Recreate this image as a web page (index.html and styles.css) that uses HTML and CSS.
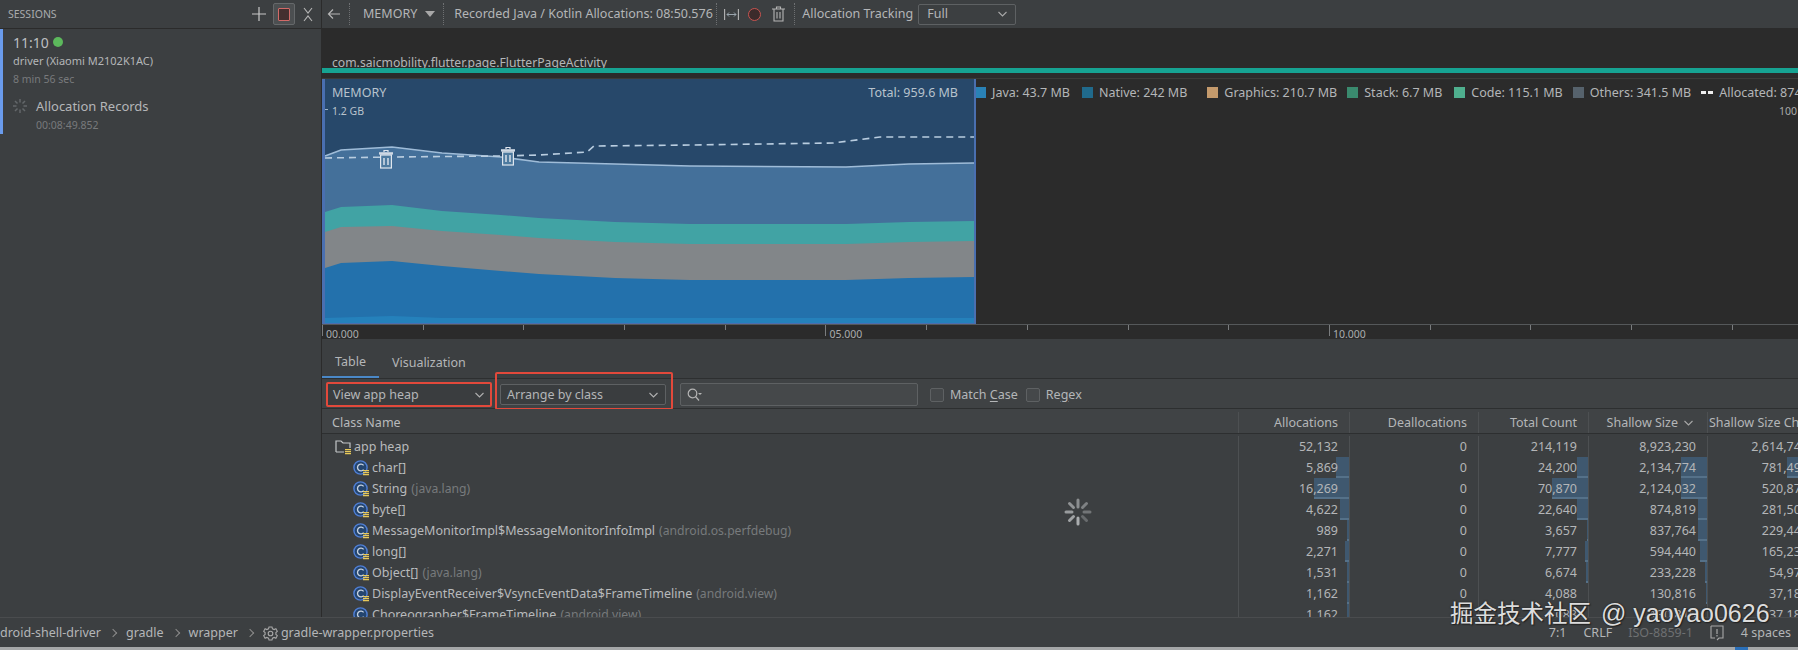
FILE: index.html
```html
<!DOCTYPE html>
<html lang="en">
<head>
<meta charset="utf-8">
<title>Memory Profiler</title>
<link rel="stylesheet" href="styles.css">
</head>
<body>
<svg class="defs" width="0" height="0">
  <symbol id="class-icon" viewBox="0 0 18 16">
    <circle cx="7.5" cy="7.5" r="6.6" fill="#24456f" stroke="#4f7fd6" stroke-width="1.4"/>
    <path d="M10.6 5.4A3.4 3.4 0 1 0 10.6 9.6" fill="none" stroke="#c9d3e0" stroke-width="1.3"/>
    <path d="M10 10.6h6M10 12.6h6M10 14.6h6" stroke="#e8c95a" stroke-width="1.1"/>
  </symbol>
  <symbol id="folder-icon" viewBox="0 0 18 16">
    <path d="M1 13V2h5l2 2h7v5M9 13H1" fill="none" stroke="#c4c7c9" stroke-width="1.2"/>
    <path d="M10 10.6h6M10 12.6h6M10 14.6h6" stroke="#e8c95a" stroke-width="1.1"/>
  </symbol>
  <symbol id="marker" viewBox="0 0 16 20">
    <path d="M6 3V1.5h4V3" fill="none" stroke="#dfe6ee" stroke-width="1.2"/>
    <rect x="1" y="3.2" width="14" height="2.4" fill="#cfd9e4"/>
    <rect x="2.6" y="6" width="10.8" height="13" fill="#4d7a9f" stroke="#dfe6ee" stroke-width="1.2"/>
    <path d="M6 9v7M10 9v7" stroke="#dfe6ee" stroke-width="1.4"/>
  </symbol>
</svg>

<div class="app">
  <aside class="sidebar">
    <div class="side-head">
      <span class="side-title">SESSIONS</span>
      <svg class="ic-plus" width="14" height="14" viewBox="0 0 14 14"><path d="M7 0v14M0 7h14" stroke="#c8c8c8" stroke-width="1.2"/></svg>
      <span class="stop-btn"><span class="stop-inner"></span></span>
      <svg class="ic-collapse" width="10" height="15" viewBox="0 0 10 15"><path d="M1 1l4 5 4-5M1 14l4-5 4 5" fill="none" stroke="#b5b5b5" stroke-width="1.1"/></svg>
    </div>
    <div class="session">
      <div class="sess-time">11:10<span class="dot"></span></div>
      <div class="sess-dev">driver (Xiaomi M2102K1AC)</div>
      <div class="sess-len">8 min 56 sec</div>
      <div class="rec-row">
        <svg class="rec-spin" width="14" height="14" viewBox="0 0 14 14"><path d="M7 0v3.5M7 10.5V14M0 7h3.5M10.5 7H14M2 2l2.5 2.5M9.5 9.5L12 12M12 2L9.5 4.5M4.500 9.5L2 12" stroke="#63676a" stroke-width="1.5"/></svg>
        <span>Allocation Records</span>
      </div>
      <div class="rec-time">00:08:49.852</div>
    </div>
  </aside>

  <main class="main">
    <div class="toolbar">
      <svg class="ic-back" width="14" height="12" viewBox="0 0 14 12"><path d="M13 6H2M6 1.500L1.500 6 6 10.500" fill="none" stroke="#b5b5b5" stroke-width="1.2"/></svg>
      <span class="sep sep-a"></span>
      <span class="tb-mem">MEMORY</span>
      <svg class="ic-tri" width="10" height="6" viewBox="0 0 10 6"><path d="M0 0h10L5 6z" fill="#a8a8a8"/></svg>
      <span class="sep sep-b"></span>
      <span class="tb-rec">Recorded Java / Kotlin Allocations: 08:50.576</span>
      <span class="sep sep-c"></span>
      <svg class="ic-fit" width="15" height="13" viewBox="0 0 15 13"><path d="M.6 1v11M14.400 1v11" stroke="#b5b5b5" stroke-width="1.1"/><path d="M3 6.500h9M5 4.500L3 6.500l2 2M10 4.500l2 2-2 2" fill="none" stroke="#9aa5ad" stroke-width="1"/></svg>
      <span class="rec-btn"></span>
      <svg class="ic-trash" width="13" height="16" viewBox="0 0 13 16"><path d="M0 3h13M4.500 3V1h4v2M2 3.500V15h9V3.500M5 6v6.500M8 6v6.500" fill="none" stroke="#b5b5b5" stroke-width="1.1"/></svg>
      <span class="sep sep-d"></span>
      <span class="tb-track">Allocation Tracking</span>
      <span class="combo combo-full"><span>Full</span><svg class="chev" width="9" height="6" viewBox="0 0 9 6"><path d="M.5 1l4 4 4-4" fill="none" stroke="#a8a8a8" stroke-width="1.1"/></svg></span>
    </div>

    <div class="activity">
      <span class="activity-name">com.saicmobility.flutter.page.FlutterPageActivity</span>
      <div class="activity-bar"></div>
    </div>

    <div class="monitor">
      <div class="chart">
        <svg class="chart-svg" width="654" height="245" viewBox="322 79 654 245">
          <rect x="322" y="79" width="654" height="245" fill="#27486a"/>
          <path d="M325 156L341 150 392 147 442 153 501 157 539 162 615 164 690 166 846 167 909 164 974 163V323H325Z" fill="#44709a"/>
          <path d="M325 212L341 207 392 205 442 211 501 215 539 218 615 222 690 224 846 224 909 222 974 221V323H325Z" fill="#41a3a4"/>
          <path d="M325 232L341 227 392 226 442 231 501 235 539 238 615 242 690 244 846 244 909 242 974 241V323H325Z" fill="#828689"/>
          <path d="M325 268L341 263 392 261 442 266 501 271 539 274 615 278 690 280 846 280 909 278 974 277V323H325Z" fill="#2371ac"/>
          <path d="M325 318L392 316 442 318H974V323H325Z" fill="#2581bb"/>
          <path d="M325 156L341 150 392 147 442 153 501 157 539 162 615 164 690 166 846 167 909 164 974 163" fill="none" stroke="#9fbcd8" stroke-width="1.6"/>
          <path d="M325 158L392 157 501 156 539 155 587 152 594 146 690 145 833 143 880 137H974" fill="none" stroke="#b9cde0" stroke-width="1.6" stroke-dasharray="7 5"/>
          <use href="#marker" x="378" y="149" width="16" height="20"/>
          <use href="#marker" x="500" y="146" width="16" height="20"/>
          <rect x="322" y="79" width="3" height="245" fill="#4a6fb0"/>
          <rect x="974" y="79" width="2" height="245" fill="#4a6fb0"/>
          <rect x="322" y="323" width="654" height="1" fill="#4a6fb0"/>
          <rect x="325" y="109" width="3" height="1" fill="#9fb3c6"/>
        </svg>
        <span class="chart-title">MEMORY</span>
        <span class="chart-scale">1.2 GB</span>
        <span class="chart-total">Total: 959.6 MB</span>
      </div>
      <div class="legend">
        <span class="lg lg-java"><i class="sw"></i>Java: 43.7 MB</span>
        <span class="lg lg-native"><i class="sw"></i>Native: 242 MB</span>
        <span class="lg lg-graphics"><i class="sw"></i>Graphics: 210.7 MB</span>
        <span class="lg lg-stack"><i class="sw"></i>Stack: 6.7 MB</span>
        <span class="lg lg-code"><i class="sw"></i>Code: 115.1 MB</span>
        <span class="lg lg-others"><i class="sw"></i>Others: 341.5 MB</span>
        <span class="lg lg-alloc"><i class="dash"></i>Allocated: 874.2 MB</span>
      </div>
      <span class="right-scale">100</span>
    </div>

    <div class="axis">
      <span class="tick major"><em>00.000</em></span><span class="tick"></span><span class="tick"></span><span class="tick"></span><span class="tick"></span>
      <span class="tick major"><em>05.000</em></span><span class="tick"></span><span class="tick"></span><span class="tick"></span><span class="tick"></span>
      <span class="tick major"><em>10.000</em></span><span class="tick"></span><span class="tick"></span><span class="tick"></span><span class="tick"></span>
    </div>

    <div class="tabs">
      <span class="tab active">Table</span>
      <span class="tab">Visualization</span>
    </div>

    <div class="filters">
      <span class="combo combo-heap mark-heap"><span>View app heap</span><svg class="chev" width="9" height="6" viewBox="0 0 9 6"><path d="M.5 1l4 4 4-4" fill="none" stroke="#b0b0b0" stroke-width="1.1"/></svg></span>
      <span class="combo combo-arrange mark-arrange"><span>Arrange by class</span><svg class="chev" width="9" height="6" viewBox="0 0 9 6"><path d="M.5 1l4 4 4-4" fill="none" stroke="#b0b0b0" stroke-width="1.1"/></svg></span>
      <span class="search">
        <svg width="15" height="14" viewBox="0 0 15 14"><circle cx="5.500" cy="5.500" r="4.300" fill="none" stroke="#b5b5b5" stroke-width="1.2"/><path d="M8.500 8.500L12 12.500" stroke="#b5b5b5" stroke-width="1.2"/><path d="M11 5h4l-2 2z" fill="#b5b5b5"/></svg>
      </span>
      <span class="check check-a"></span><span class="check-label">Match <u>C</u>ase</span>
      <span class="check check-b"></span><span class="check-label">Re<u>g</u>ex</span>
    </div>

    <div class="table">
      <div class="row head">
        <span class="c name">Class Name</span>
        <span class="c num">Allocations</span>
        <span class="c num">Deallocations</span>
        <span class="c num">Total Count</span>
        <span class="c num sorted">Shallow Size<svg class="chev" width="9" height="6" viewBox="0 0 9 6"><path d="M.5 1l4 4 4-4" fill="none" stroke="#a8a8a8" stroke-width="1.1"/></svg></span>
        <span class="c last">Shallow Size Change</span>
      </div>
      <div class="row">
        <span class="c name root"><svg class="ic"><use href="#folder-icon"/></svg>app heap</span>
        <span class="c num">52,132</span><span class="c num">0</span><span class="c num">214,119</span><span class="c num">8,923,230</span><span class="c num end">2,614,748</span>
      </div>
      <div class="row">
        <span class="c name"><svg class="ic"><use href="#class-icon"/></svg>char[]</span>
        <span class="c num"><b class="bar" style="width:13px"></b>5,869</span><span class="c num">0</span><span class="c num"><b class="bar" style="width:11px"></b>24,200</span><span class="c num"><b class="bar" style="width:26px"></b>2,134,774</span><span class="c num end"><b class="bar" style="width:32px"></b>781,496</span>
      </div>
      <div class="row">
        <span class="c name"><svg class="ic"><use href="#class-icon"/></svg>String <small>(java.lang)</small></span>
        <span class="c num"><b class="bar" style="width:35px"></b>16,269</span><span class="c num">0</span><span class="c num"><b class="bar" style="width:36px"></b>70,870</span><span class="c num"><b class="bar" style="width:26px"></b>2,124,032</span><span class="c num end">520,872</span>
      </div>
      <div class="row">
        <span class="c name"><svg class="ic"><use href="#class-icon"/></svg>byte[]</span>
        <span class="c num"><b class="bar" style="width:9px"></b>4,622</span><span class="c num">0</span><span class="c num"><b class="bar" style="width:11px"></b>22,640</span><span class="c num"><b class="bar" style="width:9px"></b>874,819</span><span class="c num end">281,504</span>
      </div>
      <div class="row">
        <span class="c name"><svg class="ic"><use href="#class-icon"/></svg>MessageMonitorImpl$MessageMonitorInfoImpl <small>(android.os.perfdebug)</small></span>
        <span class="c num"><b class="bar" style="width:2px"></b>989</span><span class="c num">0</span><span class="c num"><b class="bar" style="width:1px"></b>3,657</span><span class="c num"><b class="bar" style="width:9px"></b>837,764</span><span class="c num end">229,440</span>
      </div>
      <div class="row">
        <span class="c name"><svg class="ic"><use href="#class-icon"/></svg>long[]</span>
        <span class="c num"><b class="bar" style="width:4px"></b>2,271</span><span class="c num">0</span><span class="c num"><b class="bar" style="width:3px"></b>7,777</span><span class="c num"><b class="bar" style="width:7px"></b>594,440</span><span class="c num end">165,232</span>
      </div>
      <div class="row">
        <span class="c name"><svg class="ic"><use href="#class-icon"/></svg>Object[] <small>(java.lang)</small></span>
        <span class="c num"><b class="bar" style="width:2px"></b>1,531</span><span class="c num">0</span><span class="c num"><b class="bar" style="width:2px"></b>6,674</span><span class="c num"><b class="bar" style="width:2px"></b>233,228</span><span class="c num end">54,976</span>
      </div>
      <div class="row">
        <span class="c name"><svg class="ic"><use href="#class-icon"/></svg>DisplayEventReceiver$VsyncEventData$FrameTimeline <small>(android.view)</small></span>
        <span class="c num"><b class="bar" style="width:2px"></b>1,162</span><span class="c num">0</span><span class="c num">4,088</span><span class="c num"><b class="bar" style="width:1px"></b>130,816</span><span class="c num end">37,184</span>
      </div>
      <div class="row">
        <span class="c name"><svg class="ic"><use href="#class-icon"/></svg>Choreographer$FrameTimeline <small>(android.view)</small></span>
        <span class="c num"><b class="bar" style="width:2px"></b>1,162</span><span class="c num">0</span><span class="c num">4,088</span><span class="c num">130,816</span><span class="c num end">37,184</span>
      </div>
      <svg class="spinner" width="30" height="30" viewBox="0 0 30 30">
        <path d="M15 3v7" stroke="#8a8d8f" stroke-width="3" stroke-linecap="round"/>
        <path d="M23.500 6.500l-4 4" stroke="#7e8183" stroke-width="3" stroke-linecap="round"/>
        <path d="M27 15h-6" stroke="#727577" stroke-width="3" stroke-linecap="round"/>
        <path d="M23.500 23.500l-4-4" stroke="#686b6d" stroke-width="3" stroke-linecap="round"/>
        <path d="M15 27v-6" stroke="#aaadaf" stroke-width="3" stroke-linecap="round"/>
        <path d="M6.500 23.500l4-4" stroke="#a0a3a5" stroke-width="3" stroke-linecap="round"/>
        <path d="M3 15h6" stroke="#989b9d" stroke-width="3" stroke-linecap="round"/>
        <path d="M6.500 6.500l4 4" stroke="#909395" stroke-width="3" stroke-linecap="round"/>
      </svg>
    </div>
  </main>
</div>

<footer class="status">
  <div class="crumbs">
    <span class="crumb">droid-shell-driver</span><i class="gt"></i>
    <span class="crumb">gradle</span><i class="gt"></i>
    <span class="crumb">wrapper</span><i class="gt"></i>
    <svg class="gear" width="15" height="15" viewBox="0 0 15 15"><circle cx="7.500" cy="7.500" r="2.300" fill="none" stroke="#a8a8a8" stroke-width="1.100"/><path d="M6 1h3l.5 1.800 1.700.8 1.700-.8 1.400 2.500-1.400 1.300v1.800l1.400 1.300-1.400 2.500-1.700-.8-1.700.8L9 14H6l-.5-1.800-1.700-.8-1.700.8L.7 9.700l1.400-1.300V6.600L.7 5.300l1.400-2.500 1.700.8 1.700-.8z" fill="none" stroke="#a8a8a8" stroke-width="1.100"/></svg>
    <span class="crumb">gradle-wrapper.properties</span>
  </div>
  <div class="status-right">
    <span class="st-pos">7:1</span>
    <span class="st-crlf">CRLF</span>
    <span class="st-enc">ISO-8859-1</span>
    <svg class="st-ic" width="14" height="16" viewBox="0 0 14 16"><path d="M1 1h12v12H9l-2 2" fill="none" stroke="#a8a8a8" stroke-width="1.100"/><path d="M1 1v12h4" fill="none" stroke="#a8a8a8" stroke-width="1.100"/><path d="M7 4v5M7 10v1.500" stroke="#a8a8a8" stroke-width="1.200"/></svg>
    <span class="st-ind">4 spaces</span>
  </div>
</footer>
<div class="strip"><span class="strip-mark"></span></div>
<div class="watermark">掘金技术社区<span class="wm-latin">@ yaoyao0626</span></div>
</body>
</html>
```
FILE: styles.css
```css
* { box-sizing: border-box; }
html, body { margin: 0; height: 650px; overflow: hidden; }
body {
  position: relative;
  display: flex;
  flex-direction: column;
  width: 1798px;
  background: #3c3f41;
  color: #b4b6b8;
  font: 12.5px/16px "Noto Sans", "Noto Sans CJK SC", sans-serif;
}
.defs { position: absolute; }
.app { display: flex; height: 617px; min-height: 0; }

/* sidebar */
.sidebar { flex: 0 0 322px; background: #3c3f41; border-right: 1px solid #2b2b2b; }
.side-head {
  display: flex; align-items: center; height: 29px; padding-left: 8px;
  border-bottom: 1px solid #2b2b2b;
}
.side-title { font-size: 10.5px; color: #a9abad; flex: 1; }
.ic-plus { margin-right: 7px; }
.stop-btn {
  display: flex; align-items: center; justify-content: center;
  width: 22px; height: 22px; margin-right: 8px;
  background: #4c4f51; border: 1px solid #65686a; border-radius: 2px;
}
.stop-inner { width: 12px; height: 13px; background: #432f2f; border: 1px solid #d26a68; border-radius: 1px; }
.ic-collapse { margin-right: 8px; }
.session { height: 105px; padding: 4px 0 0 10px; border-left: 3px solid #6a9bec; }
.sess-time { display: flex; align-items: center; font-size: 14px; line-height: 20px; color: #bcbec0; }
.dot { width: 10px; height: 10px; margin: -3px 0 0 4px; border-radius: 50%; background: #5cb85c; }
.sess-dev { margin-top: 0; font-size: 11px; color: #b4b6b8; line-height: 16px; }
.sess-len { margin-top: 2px; font-size: 10.5px; color: #787a7c; line-height: 16px; }
.rec-row { display: flex; align-items: center; gap: 9px; margin-top: 10px; font-size: 13px; line-height: 18px; color: #b4b6b8; }
.rec-time { margin: 3px 0 0 23px; font-size: 10.500px; line-height: 14px; color: #787a7c; }

/* toolbar */
.main { position: relative; flex: 1; min-width: 0; display: flex; flex-direction: column; overflow: hidden; }
.toolbar { display: flex; align-items: center; flex: 0 0 28px; background: #3c3f41; white-space: nowrap; }
.ic-back { margin-left: 5px; }
.sep { width: 0; height: 22px; border-left: 1px dotted #6e7072; }
.sep-a { margin-left: 8px; }
.tb-mem { margin-left: 13px; }
.ic-tri { margin-left: 8px; }
.sep-b { margin-left: 8px; }
.tb-rec { margin-left: 10px; width: 260px; }
.sep-c { margin-left: 2px; }
.ic-fit { margin-left: 7px; }
.rec-btn { width: 13px; height: 13px; margin-left: 9px; border-radius: 50%; border: 1px solid #c75450; background: #3c2b2b; }
.ic-trash { margin-left: 11px; }
.sep-d { margin-left: 9px; }
.tb-track { margin-left: 7px; width: 113px; }
.combo {
  display: flex; align-items: center; justify-content: space-between;
  border: 1px solid #5e6163; border-radius: 2px; background: #3c3f41; padding: 0 8px;
}
.combo-full { width: 98px; height: 21px; margin-left: 3px; }

/* activity */
.activity { flex: 0 0 51px; display: flex; flex-direction: column; justify-content: flex-end; background: #2b2b2b; border-bottom: 1px solid #3b3b38; padding-bottom: 5px; }
.activity-name { padding-left: 10px; font-size: 12.200px; line-height: 15px; margin-bottom: -2px; color: #b4b6b8; }
.activity-bar { height: 5px; background: #16a392; }

/* chart */
.monitor { position: relative; display: flex; flex: 0 0 245px; background: #2b2b2b; }
.chart { position: relative; flex: 0 0 654px; height: 245px; }
.chart-svg { display: block; }
.chart-title, .chart-scale, .chart-total { position: absolute; color: #b8c3cd; }
.chart-title { left: 10px; top: 6px; }
.chart-scale { left: 10px; top: 24px; font-size: 10.500px; }
.chart-total { right: 18px; top: 6px; }
.legend { display: flex; height: 21px; padding: 6px 0 0 1px; white-space: nowrap; }
.lg { display: flex; align-items: center; margin-right: 10px; }
.sw { width: 11px; height: 11px; margin-right: 6px; }
.lg-java { margin-left: -2px; margin-right: 12px; }
.lg-java .sw { background: #2a82b6; }
.lg-native { margin-right: 20px; }
.lg-native .sw { background: #206a8c; }
.lg-graphics .sw { background: #c49a6c; }
.lg-stack { margin-right: 12px; }
.lg-stack .sw { background: #3a8a6e; }
.lg-code .sw { background: #4faf8e; }
.lg-others .sw { background: #56626c; }
.dash { width: 12px; height: 3px; margin-right: 6px; background: linear-gradient(90deg, #eee 0 5px, transparent 5px 7px, #eee 7px); }
.right-scale { position: absolute; left: 1457px; top: 24px; font-size: 10.500px; color: #a8a8a8; }

/* axis */
.axis { display: flex; flex: 0 0 15px; background: #2b2b2b; border-top: 1px solid #55585a; }
.tick { position: relative; flex: 0 0 100.700px; height: 5px; border-left: 1px solid #7a7c7e; }
.tick.major { height: 11px; }
.tick em { position: absolute; left: 3px; top: 3px; font-style: normal; font-size: 10.500px; line-height: 13px; color: #aaacae; }

/* tabs */
.tabs { display: flex; flex: 0 0 39px; align-items: stretch; }
.tab { display: flex; align-items: center; padding: 8px 13px 0; color: #b4b6b8; }
.tab.active { border-bottom: 2px solid #4a88c7; }

/* filters */
.filters { display: flex; align-items: center; flex: 0 0 31px; border-top: 1px solid #2d2f30; border-bottom: 1px solid #2d2f30; padding: 2px 0 0 4px; background: #3f4244; }
.combo-heap { width: 166px; height: 25px; padding: 0 6px 0 5px; background: #3a3d3f; }
.combo-arrange { width: 166px; height: 21px; margin-left: 8px; background: #3a3d3f; padding: 0 7px 0 6px; }
.mark-heap, .mark-arrange { position: relative; }
.mark-heap { border: 2px solid #e2493b; }
.mark-arrange::after {
  content: ""; position: absolute; left: -6px; right: -8px; top: -13px; bottom: -6px;
  border: 2px solid #e2493b; border-radius: 2px;
}
.search { display: flex; align-items: center; width: 238px; height: 23px; margin-left: 14px; padding-left: 6px; border: 1px solid #5e6163; border-radius: 2px; background: #45484a; }
.check { width: 14px; height: 14px; border: 1px solid #5e6163; border-radius: 2px; background: #45484a; }
.check-a { margin-left: 12px; }
.check-b { margin-left: 8px; }
.check-label { margin-left: 6px; }
.check-label u { text-underline-offset: 2px; }

/* table */
.table { position: relative; flex: 1; min-height: 0; overflow: hidden; background: #3c3f41; }
.row { display: grid; grid-template-columns: 916px 111px 129px 110px 119px 112px; width: 1597px; height: 21px; }
.row.head { height: 25px; padding-top: 3px; border-bottom: 1px solid #2d2f30; background: #404345; margin-bottom: 2px; }
.c { position: relative; display: flex; align-items: center; white-space: nowrap; border-left: 1px solid #4d5052; line-height: 21px; z-index: 0; }
.c.name { border-left: 0; padding-left: 31px; color: #b8babc; }
.c.name.root { padding-left: 13px; }
.c.num { justify-content: flex-end; padding-right: 11px; }
.head .c.name { padding-left: 10px; }
.head .chev { position: absolute; right: 14px; top: 8px; }
.head .c.sorted { padding-right: 29px; }
.head .c.last { padding-left: 1px; }
.ic { flex: 0 0 18px; width: 18px; height: 16px; margin-right: 1px; }
small { margin-left: 4px; font-size: 12.200px; color: #777a7c; }
.bar { position: absolute; right: 0; top: 0; bottom: 0; z-index: -1; background: #3f586f; border-bottom: 2px solid #557189; }
.spinner { position: absolute; left: 741px; top: 88px; }

/* status */
.status { display: flex; align-items: center; justify-content: space-between; flex: 0 0 30px; padding-top: 1px; background: #3c3f41; border-top: 1px solid #4a4c4e; font-size: 12.500px; }
.crumbs { display: flex; align-items: center; }
.gt { width: 6px; height: 6px; margin: 0 10px 0 9px; border-top: 1px solid #8c8c8c; border-right: 1px solid #8c8c8c; transform: rotate(45deg); }
.gear { margin-right: 3px; margin-left: 0; }
.status-right { display: flex; align-items: center; padding-right: 7px; }
.st-pos { margin-right: 17px; }
.st-crlf { margin-right: 16px; }
.st-enc { color: #6e7072; margin-right: 17px; }
.st-ic { margin-right: 17px; }
.strip { position: relative; flex: 0 0 3px; background: #a5a7a8; }
.strip-mark { position: absolute; left: 1735px; top: 0; width: 13px; height: 3px; background: #2a6fb8; }

.watermark {
  position: absolute; left: 1450px; top: 597px; white-space: nowrap;
  font-size: 23.500px; line-height: 32px; color: #dcdcdc;
  text-shadow: 0 0 2px #222, 1px 1px 1px #222;
}
.wm-latin { margin-left: 10px; font-family: "Liberation Sans", sans-serif; font-size: 25px; }
```
